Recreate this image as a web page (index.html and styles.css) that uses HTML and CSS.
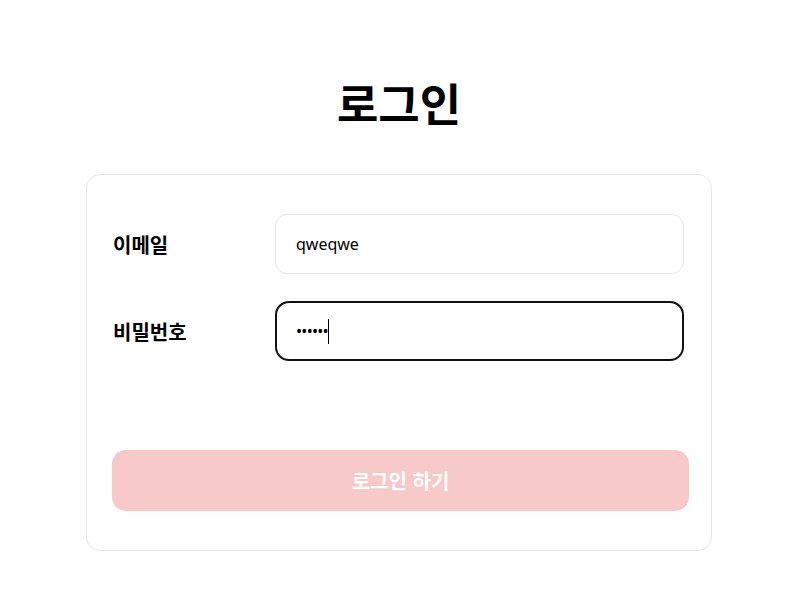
FILE: index.html
```html
<!DOCTYPE html>
<html lang="ko">
<head>
<meta charset="utf-8">
<title>로그인</title>
<link rel="stylesheet" href="styles.css">
</head>
<body>
<main class="page">
  <h1 class="title">로그인</h1>
  <form class="card">
    <div class="row">
      <label class="label" for="email">이메일</label>
      <div class="field-wrap">
        <input class="field" id="email" type="text" value="qweqwe">
      </div>
    </div>
    <div class="row">
      <label class="label" for="pw">비밀번호</label>
      <div class="field-wrap">
        <input class="field field-active field-pw" id="pw" type="password" value="qweqwe">
        <span class="caret"></span>
      </div>
    </div>
    <button class="submit" type="button">로그인 하기</button>
  </form>
</main>
</body>
</html>
```
FILE: styles.css
```css
* { box-sizing: border-box; }
html, body { margin: 0; background: #fff; }
body {
  font-family: "Noto Sans CJK KR", "Noto Sans", sans-serif;
  color: #000;
}
.page {
  display: flex;
  flex-direction: column;
  align-items: center;
  padding: 71px 0 0 13px;
}
.title {
  margin: 0;
  font-size: 45px;
  font-weight: 700;
  line-height: 63px;
}
.card {
  margin-top: 40px;
  width: 626px;
  border: 1px solid #e5e7eb;
  border-radius: 14px;
  padding: 39px 22px 39px 25px;
  display: flex;
  flex-direction: column;
}
.row {
  display: flex;
  align-items: center;
  height: 60px;
  margin-right: 5px;
}
.row + .row { margin-top: 27px; }
.label {
  width: 163px;
  padding-left: 1px;
  font-size: 20px;
  font-weight: 600;
}
.field-wrap {
  flex: 1;
  position: relative;
  height: 60px;
  display: flex;
}
.field {
  flex: 1;
  width: 100%;
  height: 60px;
  border: 1px solid #e5e7eb;
  border-radius: 12px;
  padding: 0 20px;
  font-family: "Noto Sans", sans-serif;
  font-size: 16px;
  color: #000;
  outline: none;
  background: #fff;
}
.field-active {
  border: 2px solid #111;
  border-radius: 14px;
  padding: 0 19px;
}
.field-pw {
  letter-spacing: -0.7px;
}
.caret {
  position: absolute;
  left: 53px;
  top: 18px;
  width: 1px;
  height: 25px;
  background: #000;
}
.submit {
  margin-top: 89px;
  height: 61px;
  border: 0;
  border-radius: 14px;
  background: #f7c9c9;
  color: #fff;
  font-family: "Noto Sans CJK KR", sans-serif;
  font-size: 20px;
  font-weight: 700;
}
```
